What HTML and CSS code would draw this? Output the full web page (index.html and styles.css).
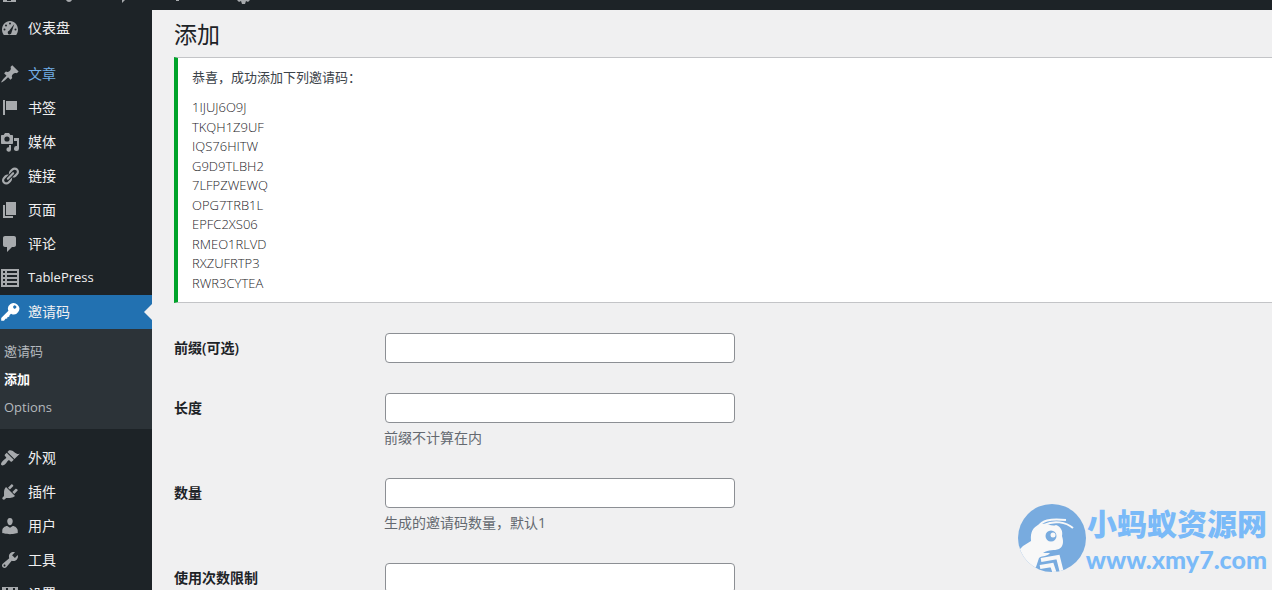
FILE: index.html
```html
<!DOCTYPE html>
<html lang="zh-CN">
<head>
    <meta charset="UTF-8">
    <meta name="viewport" content="width=device-width, initial-scale=1.0">
    <title>添加 - 邀请码</title>
    <link rel="stylesheet" href="styles.css">
</head>
<body>
    <header class="adminbar">
        <svg class="bar-icon" viewBox="0 0 20 10" aria-hidden="true"><path d="M3 4h13v3H3z"/><path class="cut" d="M7 4h4v2H7z"/></svg>
        <svg class="bar-icon" viewBox="0 0 20 10" aria-hidden="true"><path d="M6 5h6q-1 2-3 2T6 5z"/></svg>
        <svg class="bar-icon" viewBox="0 0 20 10" aria-hidden="true"><path d="M8 5h3l-3 3z"/></svg>
        <svg class="bar-icon" viewBox="0 0 20 10" aria-hidden="true"><path d="M8 5h3v1H8z"/></svg>
        <svg class="bar-icon" viewBox="0 0 20 10" aria-hidden="true"><path d="M3 5h13l-2 2-2-1-1 3H8L7 6 5 7z"/></svg>
    </header>

    <div class="wrapper">
        <nav class="menu">
            <ul class="menu-list">
                <li>
                    <a href="#">
                        <svg viewBox="0 0 20 20"><path d="M3.8 17h12.4c1.1-1.500 1.800-3.400 1.800-5.400C18 6.900 14.400 3 10 3s-8 3.900-8 8.600c0 2 .7 3.900 1.800 5.400z"/><g class="cut"><circle cx="10" cy="5.500" r="1"/><circle cx="6" cy="7.500" r="1"/><circle cx="4.500" cy="11.500" r="1"/><circle cx="15.500" cy="11.500" r="1"/><path d="M14.300 6L11.500 14.500a1.900 1.900 0 1 1-2.400-1.800z"/></g></svg>
                        <span>仪表盘</span>
                    </a>
                </li>
                <li class="separator"></li>
                <li>
                    <a href="#" class="hover">
                        <svg viewBox="0 0 20 20"><path d="M10.440 3.020l1.820-1.820 6.360 6.350-1.830 1.820c-1.050-.68-2.480-.57-3.410.36l-.75.75c-.92.93-1.040 2.350-.35 3.410l-1.830 1.820-2.410-2.410-2.800 2.790c-.42.42-3.380 2.710-3.800 2.290s1.860-3.390 2.280-3.810l2.790-2.790L4.100 9.360l1.830-1.820c1.050.69 2.480.57 3.400-.36l.75-.75c.93-.92 1.050-2.350.36-3.410z"/></svg>
                        <span>文章</span>
                    </a>
                </li>
                <li>
                    <a href="#">
                        <svg viewBox="0 0 20 20"><path d="M3 2h2v15H3zM6 3h11v9H6z"/></svg>
                        <span>书签</span>
                    </a>
                </li>
                <li>
                    <a href="#">
                        <svg viewBox="0 0 20 20"><path d="M13 11V4c0-.55-.45-1-1-1h-1.670L9 1H5L3.670 3H2c-.55 0-1 .45-1 1v7c0 .55.450 1 1 1h10c.55 0 1-.45 1-1zM14 6h5v10.500a2.500 2.500 0 1 1-2-2.450V9h-3zM11 13v4.500a2.300 2.300 0 1 1-2-2.300V13z"/><circle class="cut" cx="7" cy="7" r="2.600"/></svg>
                        <span>媒体</span>
                    </a>
                </li>
                <li>
                    <a href="#">
                        <svg viewBox="0 0 20 20"><path d="M17.740 2.760c1.680 1.690 1.680 4.410 0 6.100l-1.530 1.520c-1.120 1.120-2.700 1.470-4.140 1.090l2.620-2.610.76-.77.76-.76c.84-.84.84-2.200 0-3.040-.84-.85-2.200-.85-3.040 0l-.77.76-3.380 3.380c-.37-1.440-.02-3.020 1.100-4.140l1.520-1.530c1.690-1.680 4.420-1.680 6.100 0zM8.590 13.430l5.340-5.340c.42-.42.42-1.100 0-1.520-.44-.43-1.130-.39-1.530 0l-5.330 5.340c-.42.42-.42 1.100 0 1.520.44.43 1.130.39 1.520 0zm-.76 2.290l4.140-4.150c.38 1.440.03 3.020-1.090 4.140l-1.520 1.530c-1.690 1.680-4.410 1.680-6.100 0-1.680-1.680-1.680-4.420 0-6.100l1.530-1.520c1.120-1.120 2.700-1.470 4.140-1.100l-4.140 4.150c-.85.84-.85 2.200 0 3.050.84.84 2.200.84 3.040 0z"/></svg>
                        <span>链接</span>
                    </a>
                </li>
                <li>
                    <a href="#">
                        <svg viewBox="0 0 20 20"><path d="M6 15V2h10v13H6zm-1 1h8v2H3V5h2v11z"/></svg>
                        <span>页面</span>
                    </a>
                </li>
                <li>
                    <a href="#">
                        <svg viewBox="0 0 20 20"><path d="M5 2h9c1.100 0 2 .9 2 2v7c0 1.100-.9 2-2 2h-2l-5 5v-5H5c-1.100 0-2-.9-2-2V4c0-1.100.9-2 2-2z"/></svg>
                        <span>评论</span>
                    </a>
                </li>
                <li>
                    <a href="#">
                        <svg viewBox="0 0 20 20"><path d="M1 1h18v18H1z"/><path class="cut" d="M3 3h2v2H3zM7 3h10v2H7zM3 7h2v2H3zM7 7h10v2H7zM3 11h2v2H3zM7 11h10v2H7zM3 15h2v2H3zM7 15h10v2H7z"/></svg>
                        <span class="latin">TablePress</span>
                    </a>
                </li>
                <li class="current">
                    <a href="#">
                        <svg viewBox="0 0 20 20"><path fill-rule="evenodd" d="M17.500 2.700a5.600 5.600 0 0 1-6.500 9L9.500 13.200l-.3 1.500-1.700.2-.3 1.600-1.700.2L4 18.700H1.200V16l7.200-7.200a5.600 5.600 0 0 1 9.100-6.100zM15.800 6.300a1.600 1.600 0 1 0-2.300-2.200 1.600 1.600 0 0 0 2.300 2.200z"/></svg>
                        <span>邀请码</span>
                    </a>
                    <ul class="submenu">
                        <li><a href="#">邀请码</a></li>
                        <li><a href="#" class="active">添加</a></li>
                        <li><a href="#">Options</a></li>
                    </ul>
                </li>
                <li class="separator"></li>
                <li>
                    <a href="#">
                        <svg viewBox="0 0 20 20"><path d="M14.480 11.060L7.410 3.990l1.500-1.500c.5-.56 2.300-.47 3.510.32 1.210.8 1.430 1.280 2.910 2.100 1.180.64 2.450 1.260 4.450.85zm-.71.71L6.700 4.700 4.930 6.470c-.39.39-.39 1.020 0 1.410l1.060 1.060c.39.39.39 1.030 0 1.420-.6.600-1.430 1.110-2.210 1.690-.35.26-.7.530-1.010.84C1.430 14.230.4 16.080 1.400 17.070c.99 1 2.840-.03 4.180-1.360.31-.31.58-.66.850-1.020.57-.78 1.080-1.610 1.690-2.210.39-.39 1.020-.39 1.410 0l1.060 1.060c.39.390 1.020.39 1.410 0z"/></svg>
                        <span>外观</span>
                    </a>
                </li>
                <li>
                    <a href="#">
                        <svg viewBox="0 0 20 20"><path d="M13.110 4.360L9.870 7.600 8 5.730l3.240-3.240c.35-.34 1.050-.2 1.560.32.52.51.66 1.210.310 1.550zm-8 1.770l.91-1.120 9.010 9.010-1.190.840c-.71.710-2.630 1.160-3.820 1.160H6.140L4.900 17.260c-.59.590-1.540.590-2.120 0-.59-.58-.59-1.530 0-2.120l1.240-1.240v-3.880c0-1.130.4-3.190 1.090-3.890zm7.260 3.970l3.240-3.240c.34-.35 1.040-.21 1.550.31.520.51.660 1.210.310 1.550l-3.240 3.250z"/></svg>
                        <span>插件</span>
                    </a>
                </li>
                <li>
                    <a href="#">
                        <svg viewBox="0 0 20 20"><path d="M10 9.250c-2.270 0-2.730-3.440-2.730-3.440C7 4.020 7.820 2 9.970 2c2.160 0 2.980 2.020 2.710 3.810 0 0-.41 3.440-2.680 3.440zm0 2.570L12.720 10c2.390 0 5.020 2.330 5.020 4.530v2.490s-3.650 1.130-7.740 1.130c-4.150 0-7.740-1.130-7.740-1.130v-2.490c0-2.250 2.440-4.480 4.970-4.480z"/></svg>
                        <span>用户</span>
                    </a>
                </li>
                <li>
                    <a href="#">
                        <svg viewBox="0 0 20 20"><path fill-rule="evenodd" d="M16.680 9.770c-1.340 1.340-3.300 1.670-4.950.99l-5.410 6.520c-.99.990-2.590.990-3.580 0s-.99-2.590 0-3.570l6.520-5.420c-.68-1.650-.35-3.610.99-4.950 1.280-1.280 3.120-1.620 4.720-1.060l-2.890 2.890 2.820 2.820 2.860-2.870c.53 1.580.180 3.390-1.080 4.650zM3.810 16.210c.400.390 1.040.390 1.430 0 .400-.400.400-1.040 0-1.430-.39-.400-1.030-.400-1.430 0-.39.390-.39 1.030 0 1.430z"/></svg>
                        <span>工具</span>
                    </a>
                </li>
                <li>
                    <a href="#">
                        <svg viewBox="0 0 20 20"><path d="M2 3h16v14H2z"/><path class="cut" d="M6 4h2v2H6zM13 4h2v4h-2z"/></svg>
                        <span>设置</span>
                    </a>
                </li>
            </ul>
        </nav>

        <main class="content">
            <h1>添加</h1>

            <div class="notice">
                <p>恭喜，成功添加下列邀请码：</p>
                <ul class="codes">
                    <li>1IJUJ6O9J</li>
                    <li>TKQH1Z9UF</li>
                    <li>IQS76HITW</li>
                    <li>G9D9TLBH2</li>
                    <li>7LFPZWEWQ</li>
                    <li>OPG7TRB1L</li>
                    <li>EPFC2XS06</li>
                    <li>RMEO1RLVD</li>
                    <li>RXZUFRTP3</li>
                    <li>RWR3CYTEA</li>
                </ul>
            </div>

            <form class="form">
                <div class="form-row">
                    <label for="prefix">前缀(可选)</label>
                    <div class="field">
                        <input type="text" id="prefix" name="prefix">
                    </div>
                </div>
                <div class="form-row">
                    <label for="length">长度</label>
                    <div class="field">
                        <input type="text" id="length" name="length">
                        <p class="description">前缀不计算在内</p>
                    </div>
                </div>
                <div class="form-row">
                    <label for="number">数量</label>
                    <div class="field">
                        <input type="text" id="number" name="number">
                        <p class="description">生成的邀请码数量，默认1</p>
                    </div>
                </div>
                <div class="form-row">
                    <label for="limit">使用次数限制</label>
                    <div class="field">
                        <input type="text" id="limit" name="limit">
                    </div>
                </div>
            </form>
        </main>
    </div>

    <!-- site mark over the bottom right corner -->
    <div class="watermark">
        <svg class="ant" viewBox="0 0 68 68" aria-hidden="true">
            <defs><clipPath id="disc"><circle cx="34" cy="34" r="34"/></clipPath></defs>
            <circle cx="34" cy="34" r="34" fill="#78abdf"/>
            <g clip-path="url(#disc)">
                <path class="body" d="M0 39L2 45 5 42 13 37C12 28 15 23 22 20 29 19 34 23 38 21 43 23 45 27 44 32 46 38 45 43 41 45 36 47 31 45 25 49L32 49C29 53 25 51 21 54L18 63 14 68 0 60z"/>
                <path class="limb" d="M20 23C24 17 31 14 48 16M26 21C36 16 48 18 55 24"/>
                <path class="limb thick" d="M23 56l17-3 4 16M22 63l12-2 3 9"/>
                <circle cx="33" cy="32" r="5.500" fill="#78abdf"/>
                <circle cx="35" cy="31" r="2.500" class="body"/>
            </g>
        </svg>
        <div class="site">
            <span class="site-name">小蚂蚁资源网</span>
            <span class="site-url">www.xmy7.com</span>
        </div>
    </div>
</body>
</html>
```
FILE: styles.css
```css
* {
    margin: 0;
    padding: 0;
    box-sizing: border-box;
}

body {
    font-family: "Open Sans", "Noto Sans CJK SC", sans-serif;
    font-size: 13px;
    color: #3c434a;
    background: #f0f0f1;
    height: 100vh;
    overflow: hidden;
}

ul {
    list-style: none;
}

.adminbar {
    display: flex;
    gap: 34px;
    height: 10px;
    background: #1d2327;
}

.bar-icon {
    width: 20px;
    height: 10px;
    margin-top: -5px;
    fill: #a7aaad;
}

.bar-icon:first-child {
    margin-right: 6px;
}

.bar-icon:last-child {
    margin-left: 12px;
}

.cut {
    fill: #1d2327;
}

.wrapper {
    display: flex;
}

/* Side menu */
.menu {
    width: 152px;
    flex-shrink: 0;
    min-height: 100vh;
    padding-top: 1px;
    background: #1d2327;
}

.menu-list > li > a {
    display: flex;
    align-items: center;
    gap: 8px;
    height: 34px;
    color: #f0f0f1;
    font-size: 14px;
    text-decoration: none;
}

.menu-list > li > a span {
    padding-bottom: 2px;
}

.menu-list .latin {
    font-size: 13px;
}

.menu-list svg {
    width: 20px;
    height: 20px;
    fill: #a7aaad;
}

.menu-list .cut {
    fill: #1d2327;
}

.menu-list > li > a.hover {
    color: #72aee6;
}

.separator {
    height: 12px;
}

.current > a {
    position: relative;
    background: #2271b1;
}

.menu-list .current svg {
    fill: #fff;
}

.current > a::after {
    content: "";
    position: absolute;
    right: 0;
    top: 9px;
    border: 8px solid transparent;
    border-right-color: #f0f0f1;
    border-left: 0;
}

.submenu {
    padding: 8px 0;
    background: #2c3338;
}

.submenu a {
    display: block;
    padding-left: 4px;
    line-height: 28px;
    color: #b4b9be;
    text-decoration: none;
}

.submenu a.active {
    color: #fff;
    font-weight: 700;
}

/* Page */
.content {
    flex: 1;
    padding: 9px 0 0 22px;
}

h1 {
    font-size: 23px;
    font-weight: 400;
    line-height: 30px;
    color: #1d2327;
}

.notice {
    margin: 8px 0 20px;
    padding: 9px 14px;
    background: #fff;
    border: 1px solid #c3c4c7;
    border-left: 4px solid #00a32a;
    border-right: 0;
}

.notice p {
    line-height: 20px;
    margin-bottom: 11px;
}

.codes {
    display: grid;
    grid-auto-rows: 1fr;
    height: 195px;
    line-height: 19px;
    font-weight: 300;
    color: #1d2327;
}

.form-row {
    display: flex;
    padding: 10px 0 20px;
}

.form-row label {
    width: 210px;
    line-height: 30px;
    font-size: 14px;
    font-weight: 600;
    color: #1d2327;
}

.field input {
    display: block;
    width: 350px;
    height: 30px;
    margin-left: 1px;
    padding: 0 8px;
    border: 1px solid #8c8f94;
    border-radius: 4px;
    background: #fff;
    color: #2c3338;
    font-size: 14px;
}

.description {
    margin-top: 5px;
    line-height: 20px;
    font-size: 14px;
    color: #646970;
}

.watermark {
    position: absolute;
    right: 5px;
    bottom: 16px;
    display: flex;
}

.ant {
    width: 68px;
    height: 68px;
}

.ant .body {
    fill: #f8f8f8;
}

.ant .limb {
    fill: none;
    stroke: #f8f8f8;
    stroke-width: 2;
}

.ant .thick {
    stroke-width: 4;
}

.site {
    display: flex;
    flex-direction: column;
    align-items: flex-end;
    font-weight: 900;
    color: #7abaf8;
    white-space: nowrap;
}

.site-name {
    font-size: 30px;
    line-height: 40px;
}

.site-url {
    font-family: Lato, sans-serif;
    font-size: 25px;
    line-height: 30px;
}
```
